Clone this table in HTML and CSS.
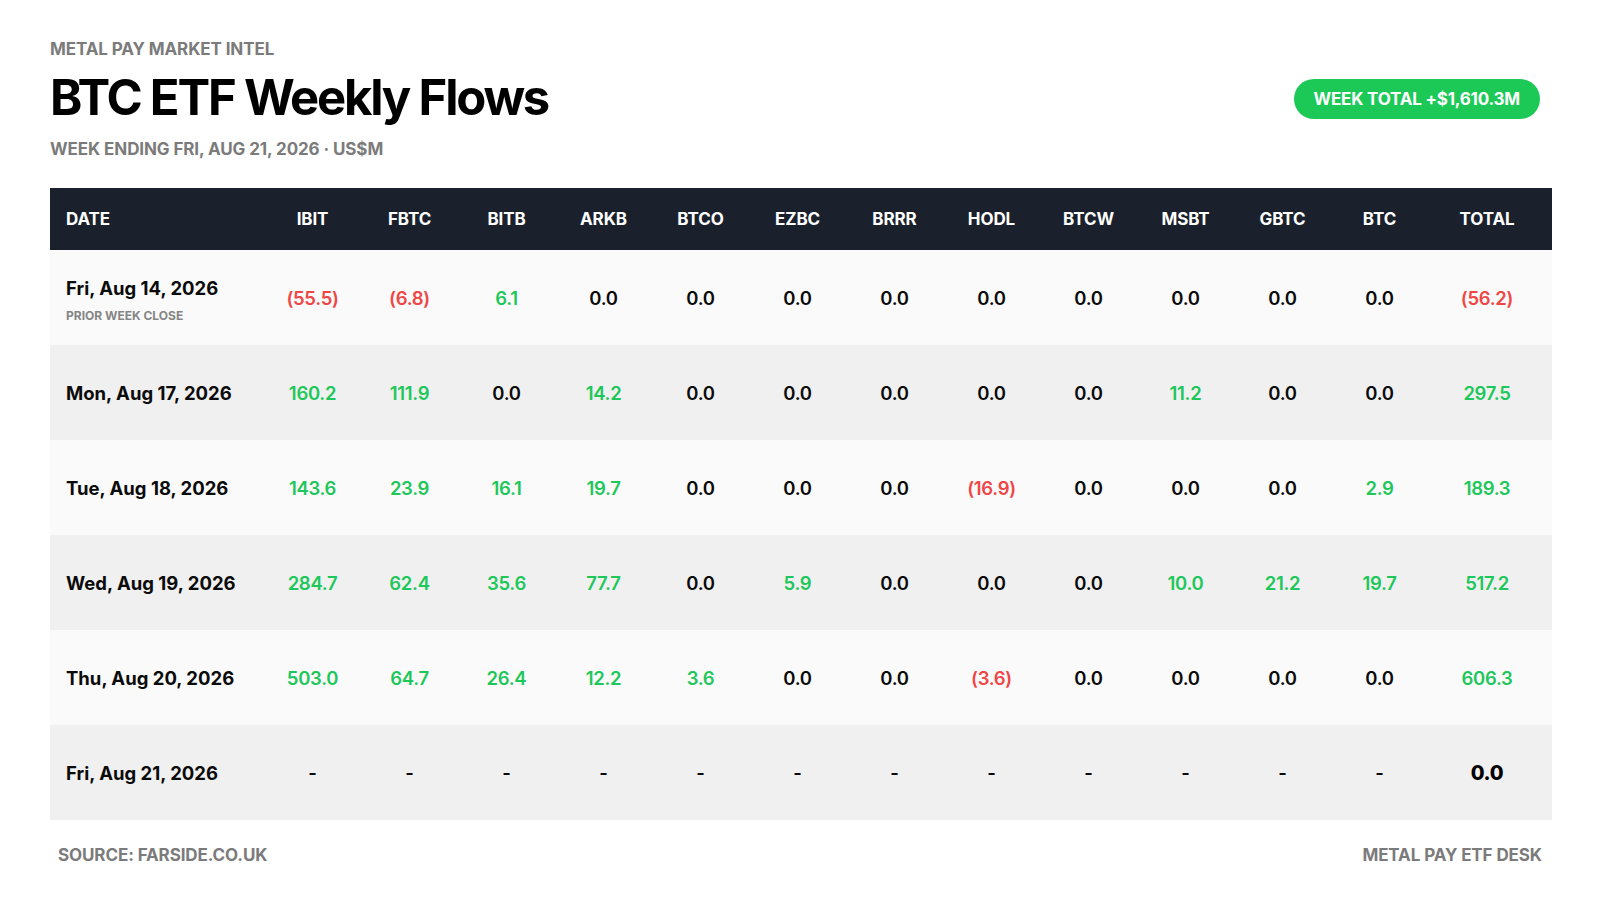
FILE: index.html
```html
<!DOCTYPE html>
<html lang="en">
<head>
<meta charset="utf-8">
<title>BTC ETF Weekly Flows</title>
<link rel="stylesheet" href="styles.css">
</head>
<body>
<div class="page">
  <header class="top">
    <div class="titles">
      <div class="eyebrow">METAL PAY MARKET INTEL</div>
      <h1 class="title">BTC ETF Weekly Flows</h1>
      <div class="subtitle">WEEK ENDING FRI, AUG 21, 2026 · US$M</div>
    </div>
    <div class="badge">WEEK TOTAL +$1,610.3M</div>
  </header>

  <table class="flows">
    <colgroup>
      <col class="c-date">
      <col class="c-num"><col class="c-num"><col class="c-num"><col class="c-num">
      <col class="c-num"><col class="c-num"><col class="c-num"><col class="c-num">
      <col class="c-num"><col class="c-num"><col class="c-num"><col class="c-num">
      <col class="c-total">
    </colgroup>
    <thead>
      <tr>
        <th class="date">DATE</th>
        <th>IBIT</th><th>FBTC</th><th>BITB</th><th>ARKB</th><th>BTCO</th><th>EZBC</th>
        <th>BRRR</th><th>HODL</th><th>BTCW</th><th>MSBT</th><th>GBTC</th><th>BTC</th>
        <th class="total">TOTAL</th>
      </tr>
    </thead>
    <tbody>
      <tr>
        <td class="date with-note"><div>Fri, Aug 14, 2026</div><div class="note">PRIOR WEEK CLOSE</div></td>
        <td class="neg">(55.5)</td><td class="neg">(6.8)</td><td class="pos">6.1</td><td>0.0</td>
        <td>0.0</td><td>0.0</td><td>0.0</td><td>0.0</td><td>0.0</td><td>0.0</td><td>0.0</td><td>0.0</td>
        <td class="total neg">(56.2)</td>
      </tr>
      <tr>
        <td class="date">Mon, Aug 17, 2026</td>
        <td class="pos">160.2</td><td class="pos">111.9</td><td>0.0</td><td class="pos">14.2</td>
        <td>0.0</td><td>0.0</td><td>0.0</td><td>0.0</td><td>0.0</td><td class="pos">11.2</td><td>0.0</td><td>0.0</td>
        <td class="total pos">297.5</td>
      </tr>
      <tr>
        <td class="date">Tue, Aug 18, 2026</td>
        <td class="pos">143.6</td><td class="pos">23.9</td><td class="pos">16.1</td><td class="pos">19.7</td>
        <td>0.0</td><td>0.0</td><td>0.0</td><td class="neg">(16.9)</td><td>0.0</td><td>0.0</td><td>0.0</td><td class="pos">2.9</td>
        <td class="total pos">189.3</td>
      </tr>
      <tr>
        <td class="date">Wed, Aug 19, 2026</td>
        <td class="pos">284.7</td><td class="pos">62.4</td><td class="pos">35.6</td><td class="pos">77.7</td>
        <td>0.0</td><td class="pos">5.9</td><td>0.0</td><td>0.0</td><td>0.0</td><td class="pos">10.0</td><td class="pos">21.2</td><td class="pos">19.7</td>
        <td class="total pos">517.2</td>
      </tr>
      <tr>
        <td class="date">Thu, Aug 20, 2026</td>
        <td class="pos">503.0</td><td class="pos">64.7</td><td class="pos">26.4</td><td class="pos">12.2</td>
        <td class="pos">3.6</td><td>0.0</td><td>0.0</td><td class="neg">(3.6)</td><td>0.0</td><td>0.0</td><td>0.0</td><td>0.0</td>
        <td class="total pos">606.3</td>
      </tr>
      <tr>
        <td class="date">Fri, Aug 21, 2026</td>
        <td>-</td><td>-</td><td>-</td><td>-</td><td>-</td><td>-</td>
        <td>-</td><td>-</td><td>-</td><td>-</td><td>-</td><td>-</td>
        <td class="total zero">0.0</td>
      </tr>
    </tbody>
  </table>

  <footer class="foot">
    <span>SOURCE: FARSIDE.CO.UK</span>
    <span>METAL PAY ETF DESK</span>
  </footer>
</div>
</body>
</html>
```

FILE: styles.css
```css
* { box-sizing: border-box; }

html, body {
  margin: 0;
  padding: 0;
  background: #ffffff;
}

body {
  font-family: Inter, "Noto Sans", "Liberation Sans", sans-serif;
  color: #0b0b0b;
  width: 1600px;
  height: 900px;
  overflow: hidden;
}

.page {
  padding: 39px 48px 0 50px;
}

.top {
  display: flex;
  justify-content: space-between;
  align-items: center;
  padding-right: 12px;
}

.eyebrow {
  font-size: 17px;
  line-height: 20px;
  font-weight: 700;
  color: #7b7b7b;
  letter-spacing: -0.1px;
}

.title {
  margin: 11px 0 0 0;
  font-size: 49px;
  line-height: 56px;
  font-weight: 700;
  letter-spacing: -2.2px;
  color: #000;
}

.subtitle {
  margin-top: 13px;
  font-size: 17px;
  line-height: 20px;
  font-weight: 700;
  color: #7b7b7b;
  letter-spacing: -0.1px;
}

.badge {
  background: #1cc957;
  color: #ffffff;
  font-size: 17px;
  line-height: 20px;
  font-weight: 700;
  letter-spacing: -0.2px;
  padding: 10px 20px;
  border-radius: 20px;
}

.flows {
  margin-top: 29px;
  width: 1502px;
  border-collapse: collapse;
  table-layout: fixed;
}

.c-date { width: 214px; }
.c-num { width: 97px; }
.c-total { width: 124px; }

.flows thead tr {
  background: #1b212c;
}

.flows th {
  height: 62px;
  padding: 0;
  color: #ffffff;
  font-size: 17px;
  font-weight: 700;
  letter-spacing: -0.1px;
  text-align: center;
}

.flows th.date,
.flows td.date {
  text-align: left;
  padding-left: 16px;
}

.flows td.with-note {
  padding-top: 4px;
}

.flows th.total,
.flows td.total {
  padding-right: 6px;
}

.flows tbody tr:nth-child(odd) { background: #fafafa; }
.flows tbody tr:nth-child(even) { background: #f0f0f0; }

.flows td {
  height: 95px;
  padding: 0;
  text-align: center;
  font-size: 18.5px;
  font-weight: 600;
  color: #0b0b0b;
  letter-spacing: -0.3px;
}

.flows td.date {
  font-size: 18.5px;
  font-weight: 700;
  letter-spacing: 0;
}

.note {
  margin-top: 9px;
  font-size: 12px;
  font-weight: 700;
  color: #858585;
  letter-spacing: 0;
}

.flows td.pos { color: #1ec75a; }
.flows td.neg { color: #f04646; }
.flows td.zero {
  font-size: 20px;
  font-weight: 800;
  color: #000;
}

.foot {
  display: flex;
  justify-content: space-between;
  padding: 25px 10px 0 8px;
  font-size: 17px;
  line-height: 20px;
  font-weight: 700;
  color: #7b7b7b;
  letter-spacing: -0.1px;
}
```
